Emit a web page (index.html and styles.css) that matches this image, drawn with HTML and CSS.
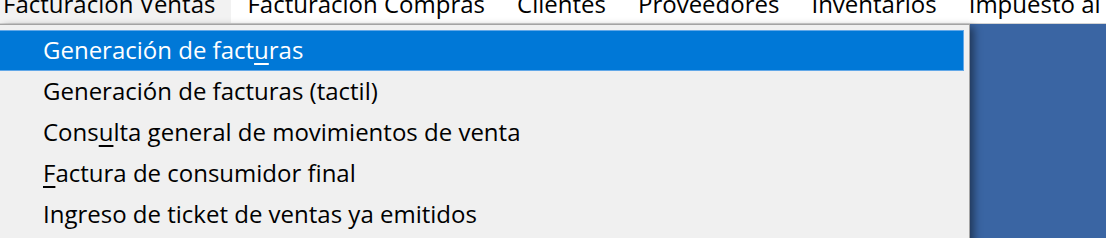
FILE: index.html
```html
<!DOCTYPE html>
<html lang="es">
<head>
<meta charset="utf-8">
<title>Facturación Ventas</title>
<link rel="stylesheet" href="styles.css">
</head>
<body>
<nav class="menubar">
  <div class="mb-item mb-open">Facturación Ventas</div>
  <div class="mb-item">Facturación Compras</div>
  <div class="mb-item">Clientes</div>
  <div class="mb-item">Proveedores</div>
  <div class="mb-item">Inventarios</div>
  <div class="mb-item">Impuesto al</div>
</nav>
<div class="workspace">
  <ul class="popup">
    <li class="item active">Generación de fact<u>u</u>ras</li>
    <li class="item">Generación de facturas (tactil)</li>
    <li class="item">Cons<u>u</u>lta general de movimientos de venta</li>
    <li class="item"><u>F</u>actura de consumidor final</li>
    <li class="item">Ingreso de ticket de ventas ya emitidos</li>
  </ul>
</div>
</body>
</html>
```
FILE: styles.css
```css
html, body {
  margin: 0;
  padding: 0;
  height: 100%;
}
body {
  background: #3a65a3;
  font-family: "Open Sans", "Noto Sans", "DejaVu Sans", sans-serif;
  font-size: 24px;
  color: #000;
  overflow: hidden;
}
.menubar {
  display: flex;
  height: 23px;
  background: #ffffff;
  border-bottom: 1px solid #d4d4d4;
  overflow: hidden;
  white-space: nowrap;
}
.mb-item {
  height: 23px;
  line-height: 8px;
  padding: 0 16px;
  flex: none;
}
.mb-open {
  background: #f2f2f2;
  padding-left: 3px;
}
.workspace {
  display: flex;
}
.popup {
  list-style: none;
  margin: 0;
  padding: 5px 5px 0 0;
  width: 964px;
  height: 220px;
  background: #f0f0f0;
  border-top: 1px solid #a3a3a3;
  border-right: 1px solid #a3a3a3;
  box-shadow: 4px 3px 8px rgba(0, 0, 0, 0.45);
}
.item {
  height: 41px;
  line-height: 38px;
  padding-left: 43px;
  white-space: nowrap;
  border: 1px solid transparent;
  border-left: 0;
  box-sizing: border-box;
}
.item.active {
  background: #0078d7;
  border-color: #62a8e8;
  color: #ffffff;
}
.item u {
  text-decoration-thickness: 2px;
  text-underline-offset: 4px;
}
```
